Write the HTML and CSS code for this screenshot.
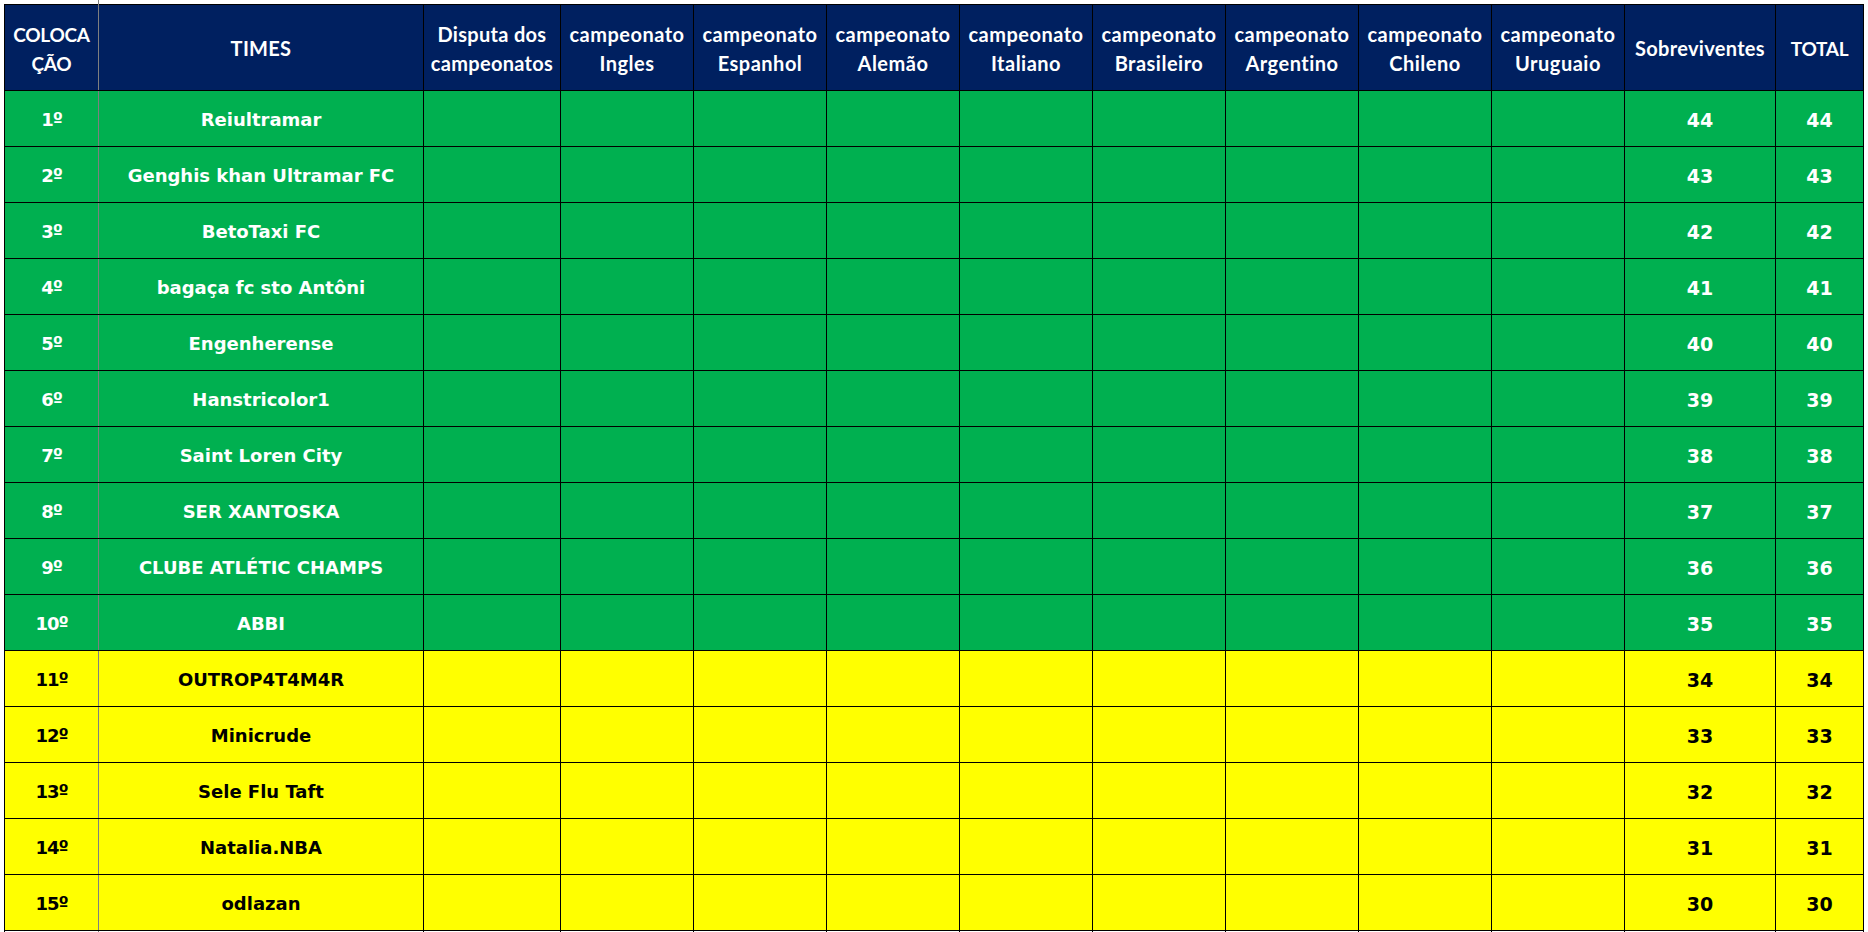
FILE: index.html
```html
<!DOCTYPE html>
<html lang="pt">
<head>
<meta charset="utf-8">
<title>Classificação</title>
<link rel="stylesheet" href="styles.css">
</head>
<body>
<main class="sheet">
<table class="standings">
<colgroup>
<col class="c-pos"><col class="c-team"><col class="c-disp">
<col class="c-champ"><col class="c-champ"><col class="c-champ"><col class="c-champ"><col class="c-champ"><col class="c-champ"><col class="c-champ"><col class="c-champ">
<col class="c-surv"><col class="c-total">
</colgroup>
<thead>
<tr>
<th class="caps">COLOCA<br>ÇÃO</th><th>TIMES</th><th>Disputa dos<br>campeonatos</th>
<th class="champ">campeonato<br>Ingles</th><th class="champ">campeonato<br>Espanhol</th><th class="champ">campeonato<br>Alemão</th><th class="champ">campeonato<br>Italiano</th><th class="champ">campeonato<br>Brasileiro</th><th class="champ">campeonato<br>Argentino</th><th class="champ">campeonato<br>Chileno</th><th class="champ">campeonato<br>Uruguaio</th>
<th>Sobreviventes</th><th class="caps">TOTAL</th>
</tr>
</thead>
<tbody>
<tr class="green"><td>1º</td><td class="name">Reiultramar</td><td></td><td></td><td></td><td></td><td></td><td></td><td></td><td></td><td></td><td class="num">44</td><td class="num">44</td></tr>
<tr class="green"><td>2º</td><td class="name">Genghis khan Ultramar FC</td><td></td><td></td><td></td><td></td><td></td><td></td><td></td><td></td><td></td><td class="num">43</td><td class="num">43</td></tr>
<tr class="green"><td>3º</td><td class="name">BetoTaxi FC</td><td></td><td></td><td></td><td></td><td></td><td></td><td></td><td></td><td></td><td class="num">42</td><td class="num">42</td></tr>
<tr class="green"><td>4º</td><td class="name">bagaça fc sto Antôni</td><td></td><td></td><td></td><td></td><td></td><td></td><td></td><td></td><td></td><td class="num">41</td><td class="num">41</td></tr>
<tr class="green"><td>5º</td><td class="name">Engenherense</td><td></td><td></td><td></td><td></td><td></td><td></td><td></td><td></td><td></td><td class="num">40</td><td class="num">40</td></tr>
<tr class="green"><td>6º</td><td class="name">Hanstricolor1</td><td></td><td></td><td></td><td></td><td></td><td></td><td></td><td></td><td></td><td class="num">39</td><td class="num">39</td></tr>
<tr class="green"><td>7º</td><td class="name">Saint Loren City</td><td></td><td></td><td></td><td></td><td></td><td></td><td></td><td></td><td></td><td class="num">38</td><td class="num">38</td></tr>
<tr class="green"><td>8º</td><td class="name">SER XANTOSKA</td><td></td><td></td><td></td><td></td><td></td><td></td><td></td><td></td><td></td><td class="num">37</td><td class="num">37</td></tr>
<tr class="green"><td>9º</td><td class="name">CLUBE ATLÉTIC CHAMPS</td><td></td><td></td><td></td><td></td><td></td><td></td><td></td><td></td><td></td><td class="num">36</td><td class="num">36</td></tr>
<tr class="green"><td>10º</td><td class="name">ABBI</td><td></td><td></td><td></td><td></td><td></td><td></td><td></td><td></td><td></td><td class="num">35</td><td class="num">35</td></tr>
<tr class="yellow"><td>11º</td><td class="name">OUTROP4T4M4R</td><td></td><td></td><td></td><td></td><td></td><td></td><td></td><td></td><td></td><td class="num">34</td><td class="num">34</td></tr>
<tr class="yellow"><td>12º</td><td class="name">Minicrude</td><td></td><td></td><td></td><td></td><td></td><td></td><td></td><td></td><td></td><td class="num">33</td><td class="num">33</td></tr>
<tr class="yellow"><td>13º</td><td class="name">Sele Flu Taft</td><td></td><td></td><td></td><td></td><td></td><td></td><td></td><td></td><td></td><td class="num">32</td><td class="num">32</td></tr>
<tr class="yellow"><td>14º</td><td class="name">Natalia.NBA</td><td></td><td></td><td></td><td></td><td></td><td></td><td></td><td></td><td></td><td class="num">31</td><td class="num">31</td></tr>
<tr class="yellow"><td>15º</td><td class="name">odlazan</td><td></td><td></td><td></td><td></td><td></td><td></td><td></td><td></td><td></td><td class="num">30</td><td class="num">30</td></tr>
<tr class="tail"><td></td><td></td><td></td><td></td><td></td><td></td><td></td><td></td><td></td><td></td><td></td><td></td><td></td></tr>
</tbody>
</table>
</main>
</body>
</html>
```
FILE: styles.css
```css
html, body {
  margin: 0;
  height: 100%;
  background: #fff;
  overflow: hidden;
}
.sheet {
  position: relative;
  padding: 4px 0 0 4px;
  height: 928px;
  overflow: hidden;
}
/* Grid-line stubs of the spreadsheet that stick out past the table */
.sheet::before {
  content: "";
  position: absolute;
  left: 98px;
  top: 0;
  width: 1px;
  height: 4px;
  background: #7f7f7f;
}
.sheet::after {
  content: "";
  position: absolute;
  left: 0;
  right: 0;
  top: 89px;
  height: 1px;
  background: #7f7f7f;
  z-index: -1;
}
.standings {
  border-collapse: collapse;
  table-layout: fixed;
  width: 1860px;
  font-family: "DejaVu Sans", sans-serif;
}
.c-pos { width: 94px; }
.c-team { width: 325px; }
.c-disp { width: 137px; }
.c-champ { width: 133px; }
.c-surv { width: 151px; }
.c-total { width: 88px; }
.standings th, .standings td {
  padding: 0;
  text-align: center;
  vertical-align: middle;
  border: 1px solid #000;
}
.standings th:first-child, .standings td:first-child {
  border-right-color: #7f7f7f;
}
.standings th {
  height: 83px;
  padding-top: 2px;
  background: #002060;
  color: #fff;
  font-family: "Lato", "Liberation Sans", sans-serif;
  font-size: 20px;
  font-weight: 700;
  line-height: 29px;
  letter-spacing: 0.3px;
}
.standings th.champ {
  letter-spacing: 0.5px;
}
.standings th.caps {
  font-size: 19px;
  letter-spacing: -0.3px;
}
.standings td {
  height: 53px;
  padding-top: 2px;
  font-size: 18px;
  font-weight: 700;
  line-height: 26px;
  letter-spacing: -1px;
}
.standings td.name {
  letter-spacing: 0;
}
.standings td.num {
  font-size: 19px;
  letter-spacing: 0;
}
.green td { background: #00b050; color: #fff; }
.yellow td { background: #ffff00; color: #000; }
.tail td { background: #fff; }
```
